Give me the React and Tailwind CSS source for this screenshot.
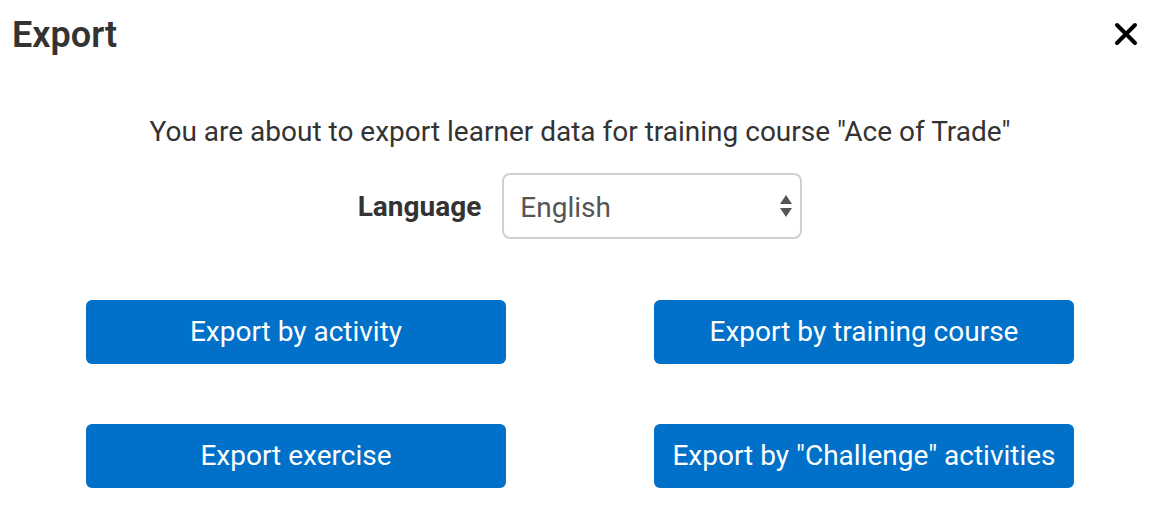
import React, { useState } from 'react';

const buttons = [
  'Export by activity',
  'Export by training course',
  'Export exercise',
  'Export by "Challenge" activities',
];

const App = () => {
  const [lang, setLang] = useState('English');

  return (
    <div className="w-[1166px] h-[508px] bg-white text-[#333] font-['Roboto',sans-serif]">
      {/* header */}
      <div className="flex items-start justify-between pl-[12px] pr-[28px] pt-[15px]">
        <h1 className="text-[36px] leading-[40px] font-semibold text-[#333]">Export</h1>
        <button className="mt-[7px] text-black">
          <svg width="24" height="24" viewBox="0 0 24 24">
            <path d="M3 3 L21 21 M21 3 L3 21" stroke="currentColor" strokeWidth="4" strokeLinecap="round" />
          </svg>
        </button>
      </div>

      {/* body */}
      <div className="w-[1160px] flex flex-col items-center pt-[60px]">
        <p className="text-[28px] leading-[34px] text-[#333]">
          You are about to export learner data for training course "Ace of Trade"
        </p>

        <div className="flex items-center gap-[21px] mt-[24px]">
          <label className="text-[28px] font-bold text-[#333] pt-[2px]">Language</label>
          <div className="relative">
            <select
              value={lang}
              onChange={(e) => setLang(e.target.value)}
              className="appearance-none w-[300px] h-[66px] rounded-[8px] border-2 border-[#d0d0d0] bg-white pl-[16px] pt-[4px] text-[28px] text-[#555] outline-none"
            >
              <option>English</option>
              <option>Français</option>
            </select>
            <svg className="absolute right-[9px] top-[20px] pointer-events-none" width="14" height="26" viewBox="0 0 14 26">
              <path d="M7 2 L13 11 L1 11 Z" fill="#555" />
              <path d="M1 15 L13 15 L7 24 Z" fill="#555" />
            </svg>
          </div>
        </div>

        <div className="grid grid-cols-[420px_420px] gap-x-[148px] gap-y-[60px] mt-[61px]">
          {buttons.map((label) => (
            <button
              key={label}
              className="h-[64px] rounded-[6px] bg-[#0070c9] text-white text-[28px] font-normal"
            >
              {label}
            </button>
          ))}
        </div>
      </div>
    </div>
  );
};

export default App;
